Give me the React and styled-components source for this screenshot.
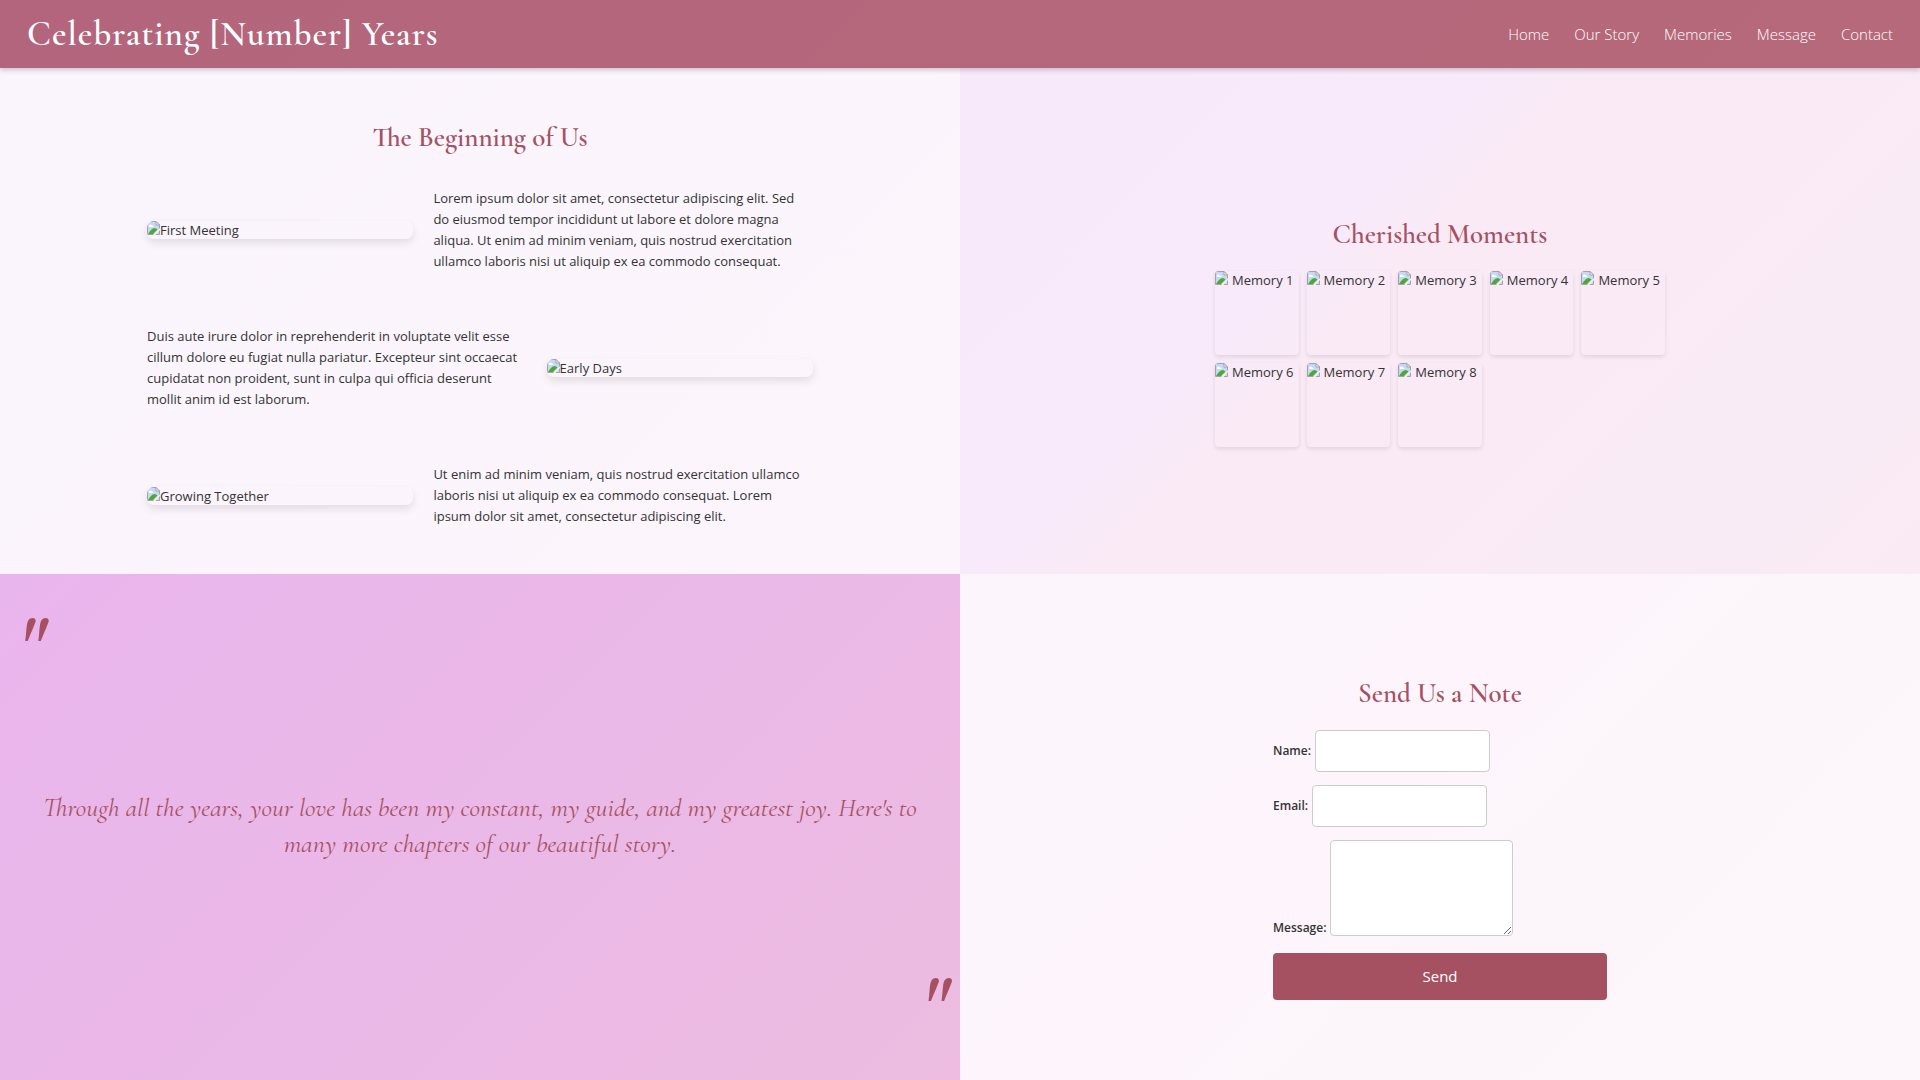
import React from "react";
import styled, { createGlobalStyle } from "styled-components";

const serif = `"Cormorant Garamond", "Liberation Serif", serif`;
const sans = `"Open Sans", "Noto Sans", sans-serif`;

const GlobalStyle = createGlobalStyle`
  *, *::before, *::after { box-sizing: border-box; }
  body {
    margin: 0;
    color: #333;
    font: 400 13px/21px ${sans};
    background: #fdf5fc;
  }
`;

const Page = styled.div`
  min-height: 100vh;
  display: flex;
  flex-direction: column;
`;

const Header = styled.header`
  display: flex;
  align-items: center;
  justify-content: space-between;
  padding: 12px 27px;
  position: relative;
  z-index: 1;
  background: linear-gradient(135deg, #b3657d, #b6697a);
  box-shadow: 0 2px 5px rgba(0, 0, 0, 0.2);
`;

const Title = styled.h1`
  margin: 0;
  color: #fff;
  font: 600 35px/44px ${serif};
  letter-spacing: 1px;
`;

const Nav = styled.nav`
  display: flex;
  gap: 25px;
`;

const NavLink = styled.a`
  color: #fff;
  font-size: 15px;
  font-weight: 300;
  text-decoration: none;
`;

const Main = styled.main`
  flex: 1;
  display: grid;
  grid-template-columns: 1fr 1fr;
  grid-template-rows: 1fr 1fr;
`;

const Panel = styled.section`
  display: flex;
  flex-direction: column;
  align-items: center;
  justify-content: ${(p) => (p.$top ? "flex-start" : "center")};
  padding: 27px 27px 30px;
  position: relative;
  background: ${(p) => p.$fill};
`;

const Heading = styled.h2`
  margin: 27px 0 ${(p) => p.$gap}px;
  color: #a55161;
  font: 600 27px/32px ${serif};
`;

const Timeline = styled.div`
  width: 100%;
  max-width: 666px;
  display: flex;
  flex-direction: column;
  gap: 54px;
`;

const Event = styled.article`
  display: flex;
  flex-direction: ${(p) => (p.$flip ? "row-reverse" : "row")};
  align-items: center;
  gap: 20px;
`;

const EventText = styled.p`
  flex: 1;
  margin: 0;
  padding-right: 4px;
`;

const Photo = styled.div`
  flex: 0 0 40%;
  display: flex;
  height: 18px;
  line-height: 18px;
  border-radius: 7px;
  overflow: hidden;
  box-shadow: 0 4px 8px rgba(0, 0, 0, 0.1);
`;

const Gallery = styled.div`
  width: 100%;
  max-width: 450px;
  display: grid;
  grid-template-columns: repeat(5, 1fr);
  gap: 8px;
`;

const Tile = styled.div`
  aspect-ratio: 1;
  display: flex;
  gap: 4px;
  line-height: 18px;
  white-space: nowrap;
  border-radius: 4px;
  overflow: hidden;
  box-shadow: 0 2px 4px rgba(0, 0, 0, 0.1);
`;

const IconSvg = styled.svg`
  flex: none;
  width: 13px;
  height: 14px;
`;

const Quote = styled.blockquote`
  margin: 0;
  text-align: center;
  color: #a55161;
  font: italic 400 26px/36px ${serif};
`;

const Mark = styled.span`
  position: absolute;
  color: #a55161;
  font: italic 400 86px/80px "Libre Baskerville", "Liberation Serif", serif;
  ${(p) => (p.$end ? "right: 14px; bottom: 20px;" : "left: 12px; top: 46px;")}
`;

const Form = styled.form`
  width: 100%;
  max-width: 334px;
  display: flex;
  flex-direction: column;
  gap: 13px;
`;

const Field = styled.div`
  display: flex;
  align-items: ${(p) => (p.$end ? "flex-end" : "center")};
  gap: 4px;
`;

const Label = styled.label`
  font-size: 12px;
  line-height: 16px;
  font-weight: 600;
`;

const Input = styled.input`
  width: 175px;
  height: 42px;
  padding: 10px;
  border: 1px solid #ccc;
  border-radius: 4px;
  background: #fff;
  font: inherit;
`;

const TextArea = styled.textarea`
  width: 183px;
  height: 96px;
  padding: 10px;
  border: 1px solid #ccc;
  border-radius: 4px;
  background: #fff;
  font: inherit;
`;

const Send = styled.button`
  margin-top: 4px;
  padding: 13px;
  border: 0;
  border-radius: 4px;
  color: #fff;
  background: #a55161;
  font: 400 15px/21px ${sans};
  cursor: pointer;
`;

const BrokenIcon = () => (
  <IconSvg viewBox="0 0 13 14" aria-hidden="true">
    <path d="M0.5 13.5V0.5H9L12.5 4V13.5Z" fill="#c3d9f7" stroke="#a3a3a3" />
    <path d="M9 0.5V4H12.5Z" fill="#fff" stroke="#a3a3a3" />
    <path d="M2 5.5a1.5 1.5 0 0 1 3-1 1.2 1.2 0 0 1 1.5 1.5H2Z" fill="#fff" />
    <path d="M1 13C3 10 5 7 8 7L10.5 8.5 6 13Z" fill="#4fa832" />
    <path d="M6 14L13 7V9L8.5 14Z" fill="#faf0f9" />
  </IconSvg>
);

const links = ["Home", "Our Story", "Memories", "Message", "Contact"];

const events = [
  {
    alt: "First Meeting",
    text: "Lorem ipsum dolor sit amet, consectetur adipiscing elit. Sed do eiusmod tempor incididunt ut labore et dolore magna aliqua. Ut enim ad minim veniam, quis nostrud exercitation ullamco laboris nisi ut aliquip ex ea commodo consequat.",
  },
  {
    alt: "Early Days",
    text: "Duis aute irure dolor in reprehenderit in voluptate velit esse cillum dolore eu fugiat nulla pariatur. Excepteur sint occaecat cupidatat non proident, sunt in culpa qui officia deserunt mollit anim id est laborum.",
  },
  {
    alt: "Growing Together",
    text: "Ut enim ad minim veniam, quis nostrud exercitation ullamco laboris nisi ut aliquip ex ea commodo consequat. Lorem ipsum dolor sit amet, consectetur adipiscing elit.",
  },
];

const memories = [1, 2, 3, 4, 5, 6, 7, 8];

export default function App() {
  return (
    <>
      <GlobalStyle />
      <Page>
        <Header>
          <Title>Celebrating [Number] Years</Title>
          <Nav>
            {links.map((name) => (
              <NavLink key={name} href={`#${name.toLowerCase().replace(" ", "-")}`}>
                {name}
              </NavLink>
            ))}
          </Nav>
        </Header>
        <Main>
          <Panel id="our-story" $top $fill="linear-gradient(135deg, #faf4fc, #fcf5fc)">
            <Heading $gap={34}>The Beginning of Us</Heading>
            <Timeline>
              {events.map((e, i) => (
                <Event key={e.alt} $flip={i % 2 === 1}>
                  <Photo>
                    <BrokenIcon />
                    <span>{e.alt}</span>
                  </Photo>
                  <EventText>{e.text}</EventText>
                </Event>
              ))}
            </Timeline>
          </Panel>
          <Panel id="memories" $fill="linear-gradient(135deg, #f7e9f9, #f8eafa 36%, #faeaf6 44%, #faeaf5 62%, #f8ebf5 80%, #faeaf3)">
            <Heading $gap={20}>Cherished Moments</Heading>
            <Gallery>
              {memories.map((n) => (
                <Tile key={n}>
                  <BrokenIcon />
                  <span>Memory {n}</span>
                </Tile>
              ))}
            </Gallery>
          </Panel>
          <Panel id="message" $fill="linear-gradient(135deg, #e9b5ed, #ebb9e6 60%, #edbce0)">
            <Mark>"</Mark>
            <Quote>
              Through all the years, your love has been my constant, my guide, and my greatest joy. Here's to
              many more chapters of our beautiful story.
            </Quote>
            <Mark $end>"</Mark>
          </Panel>
          <Panel id="contact" $fill="linear-gradient(135deg, #fcf5fc, #fdf5fb 45%, #fcf6fb 60%, #fdf7fc)">
            <Heading $gap={20}>Send Us a Note</Heading>
            <Form onSubmit={(e) => e.preventDefault()}>
              <Field>
                <Label htmlFor="name">Name:</Label>
                <Input id="name" type="text" />
              </Field>
              <Field>
                <Label htmlFor="email">Email:</Label>
                <Input id="email" type="email" />
              </Field>
              <Field $end>
                <Label htmlFor="note">Message:</Label>
                <TextArea id="note" />
              </Field>
              <Send type="submit">Send</Send>
            </Form>
          </Panel>
        </Main>
      </Page>
    </>
  );
}
